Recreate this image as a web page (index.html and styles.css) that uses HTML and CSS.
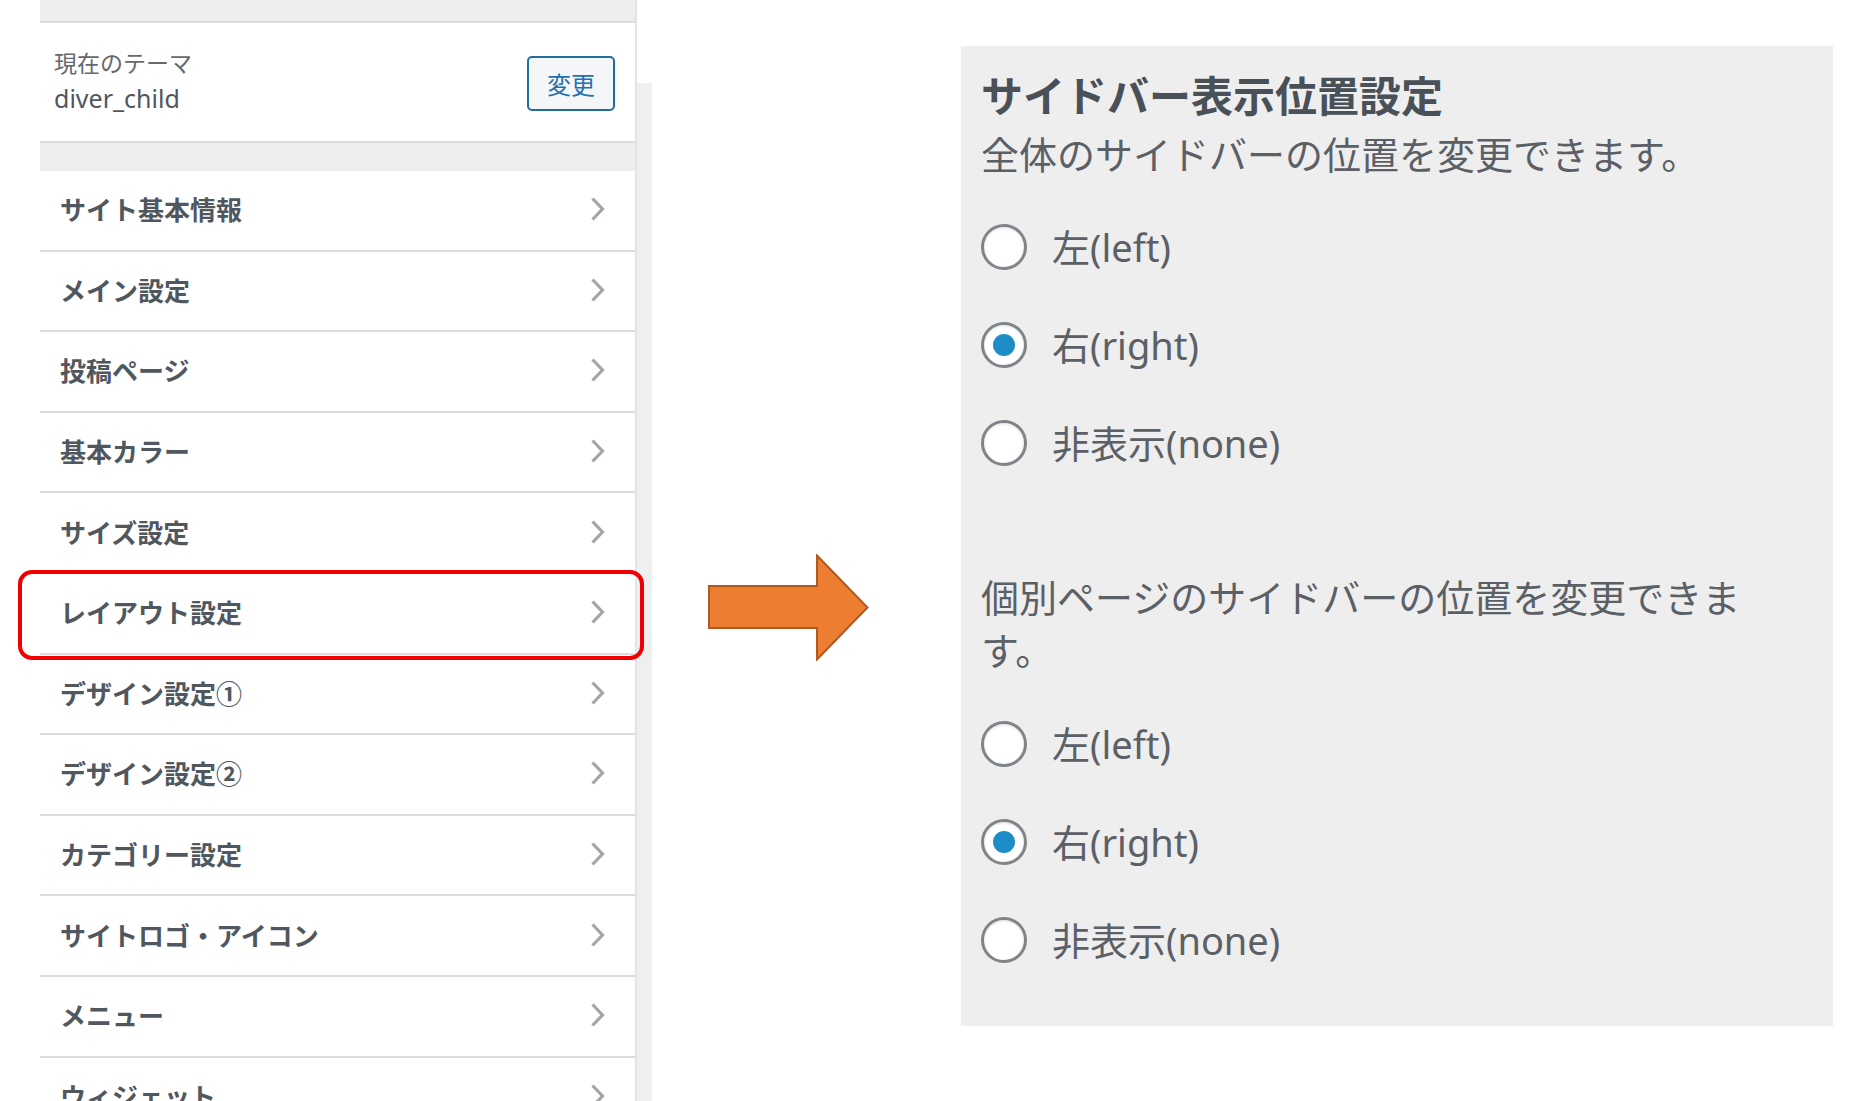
FILE: index.html
```html
<!DOCTYPE html>
<html lang="ja">
<head>
<meta charset="utf-8">
<title>サイドバー表示位置設定</title>
<link rel="stylesheet" href="styles.css">
</head>
<body>
<div class="page">
  <div class="customizer">
    <div class="pane">
      <div class="pane-top"></div>
      <div class="theme">
        <div class="theme-text">
          <div class="theme-label">現在のテーマ</div>
          <div class="theme-name">diver_child</div>
        </div>
        <button class="theme-change">変更</button>
      </div>
      <div class="pane-gap"></div>
      <ul class="menu">
        <li class="menu-item"><span>サイト基本情報</span><svg class="chev" viewBox="0 0 15 26"><polyline points="2.5,2.5 12.5,13 2.5,23.5"/></svg></li>
        <li class="menu-item"><span>メイン設定</span><svg class="chev" viewBox="0 0 15 26"><polyline points="2.5,2.5 12.5,13 2.5,23.5"/></svg></li>
        <li class="menu-item"><span>投稿ページ</span><svg class="chev" viewBox="0 0 15 26"><polyline points="2.5,2.5 12.5,13 2.5,23.5"/></svg></li>
        <li class="menu-item"><span>基本カラー</span><svg class="chev" viewBox="0 0 15 26"><polyline points="2.5,2.5 12.5,13 2.5,23.5"/></svg></li>
        <li class="menu-item"><span>サイズ設定</span><svg class="chev" viewBox="0 0 15 26"><polyline points="2.5,2.5 12.5,13 2.5,23.5"/></svg></li>
        <li class="menu-item is-marked"><span>レイアウト設定</span><svg class="chev" viewBox="0 0 15 26"><polyline points="2.5,2.5 12.5,13 2.5,23.5"/></svg></li>
        <li class="menu-item"><span>デザイン設定①</span><svg class="chev" viewBox="0 0 15 26"><polyline points="2.5,2.5 12.5,13 2.5,23.5"/></svg></li>
        <li class="menu-item"><span>デザイン設定②</span><svg class="chev" viewBox="0 0 15 26"><polyline points="2.5,2.5 12.5,13 2.5,23.5"/></svg></li>
        <li class="menu-item"><span>カテゴリー設定</span><svg class="chev" viewBox="0 0 15 26"><polyline points="2.5,2.5 12.5,13 2.5,23.5"/></svg></li>
        <li class="menu-item"><span>サイトロゴ・アイコン</span><svg class="chev" viewBox="0 0 15 26"><polyline points="2.5,2.5 12.5,13 2.5,23.5"/></svg></li>
        <li class="menu-item"><span>メニュー</span><svg class="chev" viewBox="0 0 15 26"><polyline points="2.5,2.5 12.5,13 2.5,23.5"/></svg></li>
        <li class="menu-item"><span>ウィジェット</span><svg class="chev" viewBox="0 0 15 26"><polyline points="2.5,2.5 12.5,13 2.5,23.5"/></svg></li>
      </ul>
    </div>
    <div class="strip"></div>
  </div>

  <div class="arrow">
    <svg viewBox="0 0 161 107" width="161" height="107">
      <polygon points="1,32 109,32 109,1.5 159.5,53.5 109,105.5 109,74 1,74" fill="#ed7d31" stroke="#ae5a21" stroke-width="2" stroke-linejoin="miter"/>
    </svg>
  </div>

  <div class="settings">
    <h2 class="settings-title">サイドバー表示位置設定</h2>
    <p class="settings-desc">全体のサイドバーの位置を変更できます。</p>
    <ul class="radios">
      <li class="radio-row"><span class="radio"></span><span class="radio-label">左(left)</span></li>
      <li class="radio-row"><span class="radio is-checked"></span><span class="radio-label">右(right)</span></li>
      <li class="radio-row"><span class="radio"></span><span class="radio-label">非表示(none)</span></li>
    </ul>
    <p class="settings-desc second">個別ページのサイドバーの位置を変更できます。</p>
    <ul class="radios radios-second">
      <li class="radio-row"><span class="radio"></span><span class="radio-label">左(left)</span></li>
      <li class="radio-row"><span class="radio is-checked"></span><span class="radio-label">右(right)</span></li>
      <li class="radio-row"><span class="radio"></span><span class="radio-label">非表示(none)</span></li>
    </ul>
  </div>
</div>
</body>
</html>
```

FILE: styles.css
```css
* {
  box-sizing: border-box;
}

html, body {
  margin: 0;
  padding: 0;
  background: #ffffff;
  overflow: hidden;
  height: 1101px;
}

body {
  font-family: "Noto Sans", "Noto Sans CJK JP", sans-serif;
  color: #50575e;
}

.page {
  display: flex;
  align-items: flex-start;
  width: 1869px;
  height: 1101px;
}

/* ---------- left customizer pane ---------- */
.customizer {
  display: flex;
  align-items: stretch;
  margin-left: 40px;
  flex: none;
}

.pane {
  width: 597px;
  border-right: 2px solid #e2e4e7;
  background: #ffffff;
}

.pane-top {
  height: 23px;
  background: #eeeeee;
  border-bottom: 2px solid #dcdcde;
}

.theme {
  height: 118px;
  display: flex;
  align-items: center;
  justify-content: space-between;
  padding: 0 20px 0 14px;
  background: #ffffff;
}

.theme-text {
  display: flex;
  flex-direction: column;
  margin-bottom: 2px;
}

.theme-label {
  font-size: 23px;
  line-height: 35px;
  color: #646970;
}

.theme-name {
  font-size: 25px;
  line-height: 35px;
  color: #50575e;
}

.theme-change {
  width: 88px;
  height: 55px;
  border: 2px solid #1f6f9a;
  border-radius: 5px;
  background: #f4f6f7;
  color: #2271b1;
  font-family: "Noto Sans CJK JP", sans-serif;
  font-size: 24px;
  padding: 0;
  margin-top: 2px;
}

.pane-gap {
  height: 30px;
  background: #eeeeee;
  border-top: 2px solid #dcdcde;
}

.menu {
  list-style: none;
  margin: 0;
  padding: 0;
}

.menu-item {
  position: relative;
  height: 80.6px;
  display: flex;
  align-items: center;
  justify-content: space-between;
  padding: 0 30px 2px 20px;
  border-bottom: 2px solid #dcdcde;
  background: #ffffff;
  font-size: 26px;
  font-weight: 700;
  color: #50575e;
}

.menu-item span {
  font-family: "Noto Sans CJK JP", sans-serif;
  line-height: 1;
}

.chev {
  width: 15px;
  height: 26px;
  fill: none;
  stroke: #a2a5a9;
  stroke-width: 3.2;
}

.menu-item.is-marked {
  z-index: 1;
}

.menu-item.is-marked::after {
  content: "";
  position: absolute;
  left: -22px;
  right: -9px;
  top: -4px;
  bottom: -7px;
  border: 4px solid #f00000;
  border-radius: 14px;
  pointer-events: none;
}

.strip {
  width: 15px;
  margin-top: 83px;
  background: #efefef;
}

/* ---------- arrow ---------- */
.arrow {
  flex: none;
  margin-left: 56px;
  margin-top: 554px;
  width: 161px;
  height: 107px;
}

.arrow svg {
  display: block;
}

/* ---------- right settings panel ---------- */
.settings {
  flex: none;
  margin-left: 92px;
  margin-top: 46px;
  width: 872px;
  background: #eeeeee;
  padding: 23px 20px 37px 20px;
  font-family: "Noto Sans", "Noto Sans CJK JP", sans-serif;
}

.settings-title {
  margin: 0;
  font-family: "Noto Sans CJK JP", sans-serif;
  font-size: 42px;
  line-height: 50px;
  font-weight: 700;
  color: #4a5057;
}

.settings-desc {
  margin: 7px 0 0 0;
  max-width: 780px;
  font-family: "Noto Sans CJK JP", sans-serif;
  font-size: 38px;
  line-height: 53px;
  font-weight: 400;
  color: #5b6066;
}

.settings-desc.second {
  margin-top: 77px;
}

.radios {
  list-style: none;
  margin: 19px 0 0 0;
  padding: 0;
}

.radios-second {
  margin-top: 20px;
}

.radio-row {
  height: 98px;
  display: flex;
  align-items: center;
}

.radio {
  flex: none;
  width: 46px;
  height: 46px;
  border: 3px solid #7f8489;
  border-radius: 50%;
  background: #ffffff;
  box-shadow: inset 0 1px 3px rgba(0, 0, 0, 0.12);
  display: flex;
  align-items: center;
  justify-content: center;
}

.radio.is-checked::before {
  content: "";
  width: 22px;
  height: 22px;
  border-radius: 50%;
  background: #1e8cc7;
}

.radio-label {
  margin-left: 25px;
  font-size: 38px;
  line-height: 53px;
  color: #5b6066;
}
```
